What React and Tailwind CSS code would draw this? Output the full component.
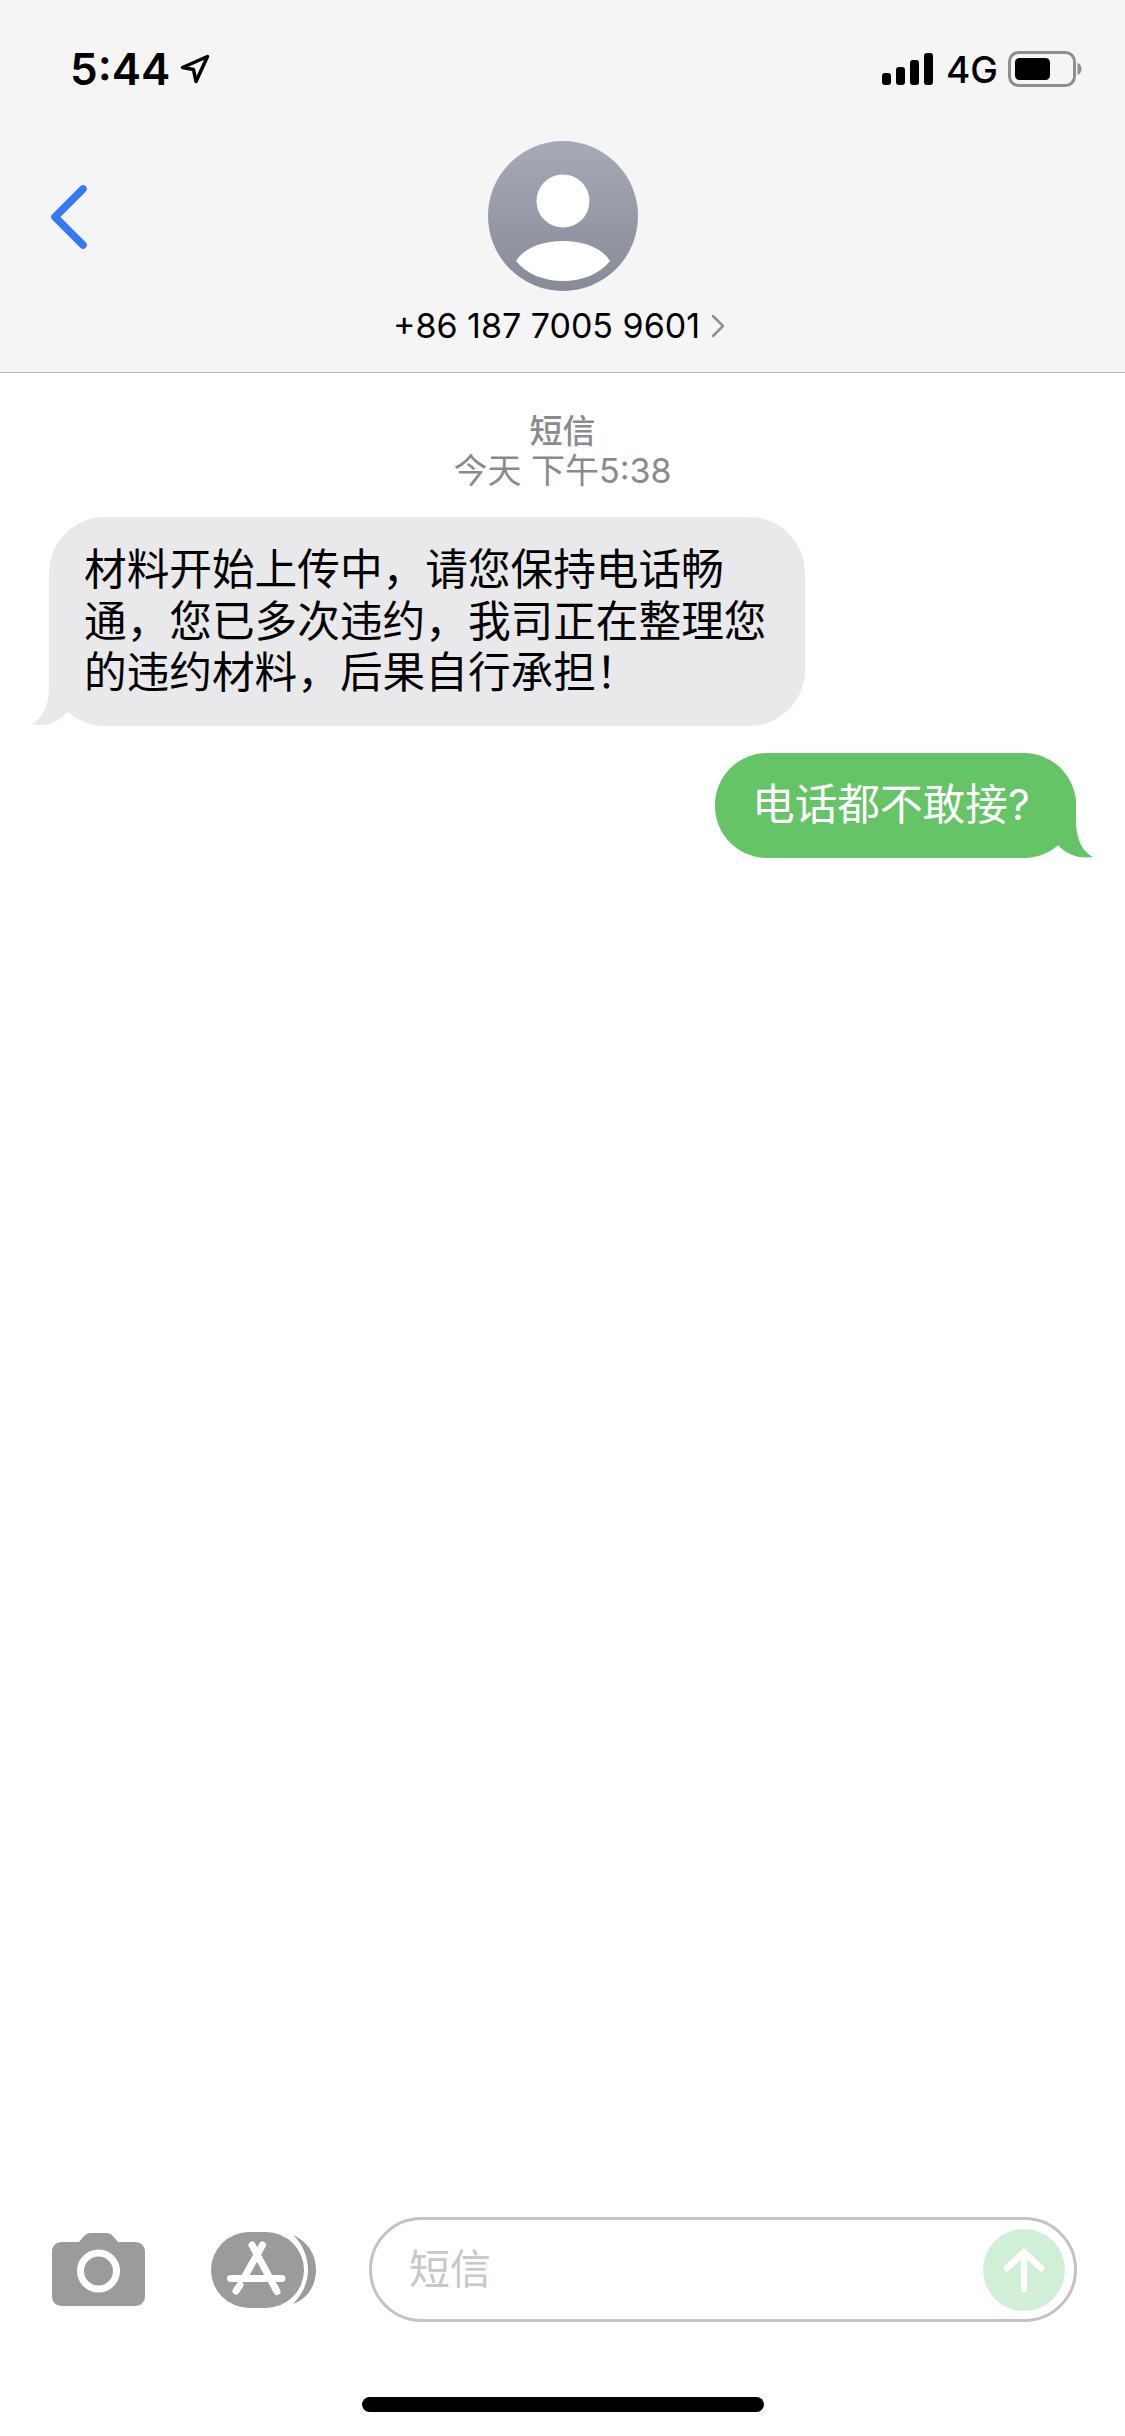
const sans = 'font-[Inter,"Noto_Sans_CJK_SC",sans-serif]'

const StatusBar = () => (
  <div className="flex h-[138px] w-full items-center justify-between pl-[70px] pr-[43px]">
    <div className="flex items-center gap-[10px]">
      <span className="text-[44px] font-semibold leading-none text-black">5:44</span>
      <svg width="30" height="30" viewBox="0 0 30 30" fill="none" stroke="#000" strokeWidth="3.5" strokeLinejoin="round">
        <path d="M2.5 13.5 27.5 2.5 16 27.5 13.5 15.5Z" />
      </svg>
    </div>
    <div className="flex items-center">
      <svg width="51" height="32" viewBox="0 0 51 32" fill="#000">
        <rect x="0" y="20" width="9" height="12" rx="3" />
        <rect x="14" y="14" width="9" height="18" rx="3" />
        <rect x="28" y="7" width="9" height="25" rx="3" />
        <rect x="42" y="0" width="9" height="32" rx="3" />
      </svg>
      <span className="ml-[13px] text-[37px] font-medium leading-none text-black">4G</span>
      <svg className="ml-[10px]" width="74" height="36" viewBox="0 0 74 36">
        <rect x="1.5" y="1.5" width="65" height="33" rx="9" fill="none" stroke="#8e8e8e" strokeWidth="3" />
        <rect x="7" y="7" width="35" height="22" rx="4.5" fill="#000" />
        <path d="M69.5 12c2.500.8 4 3 4 6s-1.500 5.200-4 6Z" fill="#8e8e8e" />
      </svg>
    </div>
  </div>
)

const ContactHeader = () => (
  <header className="flex h-[373px] w-full shrink-0 flex-col border-b border-[#b4b4b4] bg-[#f5f5f5]">
    <StatusBar />
    <div className="mt-[3px] grid grid-cols-[1fr_auto_1fr]">
      <div className="pl-[50px] pt-[44px]">
        <svg width="38" height="64" viewBox="0 0 38 64" fill="none" stroke="#3478f6" strokeWidth="7.500" strokeLinecap="round" strokeLinejoin="round">
          <path d="M33 4 5 32l28 28" />
        </svg>
      </div>
      <div className="flex flex-col items-center">
        <svg className="ml-[2px]" width="150" height="150" viewBox="0 0 150 150">
          <defs>
            <linearGradient id="avatarFill" x1="0" y1="0" x2="0" y2="1">
              <stop offset="0" stopColor="#a6aab7" />
              <stop offset="1" stopColor="#868b97" />
            </linearGradient>
          </defs>
          <circle cx="75" cy="75" r="75" fill="url(#avatarFill)" />
          <circle cx="75" cy="60" r="26.500" fill="#fff" />
          <path d="M28 120C36 107 54 100 75 100s39 7 47 20c-10 13-28 20-47 20s-37-7-47-20Z" fill="#fff" />
        </svg>
        <div className="-ml-[7px] mt-[15px] flex items-center gap-[11px]">
          <span className="whitespace-nowrap text-[34px] leading-[40px] text-black">+86 187 7005 9601</span>
          <svg width="14" height="24" viewBox="0 0 14 24" fill="none" stroke="#8a8f99" strokeWidth="2.500" strokeLinecap="round" strokeLinejoin="round">
            <path d="M2 2l10 10L2 22" />
          </svg>
        </div>
      </div>
      <div />
    </div>
  </header>
)

const Messages = () => (
  <main className="flex min-h-0 flex-1 flex-col">
    <div className="mt-[39px] flex flex-col items-center text-[#8a8a8e]">
      <span className="text-[33px] font-medium leading-[39px]">短信</span>
      <span className="text-[34px] leading-[39px]">今天 下午5:38</span>
    </div>
    <div className="relative ml-[49px] mt-[27px] w-[756px] rounded-[56px] bg-[#e9e9eb] py-[27px] pl-[35px] pr-[31px] text-[42.670px] leading-[51.500px] text-black">
      <svg className="absolute bottom-0 left-[-17px]" width="77" height="60" viewBox="0 0 77 60" fill="#e9e9eb">
        <path d="M17 0V22c0 15-5 30-17 36 13 3 26-1 34-11L60 22V0Z" />
      </svg>
      <p className="relative">材料开始上传中，请您保持电话畅通，您已多次违约，我司正在整理您的违约材料，后果自行承担！</p>
    </div>
    <div className="relative ml-[715px] mt-[27px] flex h-[105px] w-[361px] items-center rounded-[52px] bg-[#65c466] pl-[37px] text-[42.670px] leading-[51.500px] text-white">
      <svg className="absolute bottom-0 right-[-17px]" width="63" height="60" viewBox="0 0 63 60" fill="#65c466">
        <path d="M46 0V22c0 15 4 30 17 37-14 2-26-2-35-12L0 22V0Z" />
      </svg>
      <p className="relative">电话都不敢接?</p>
    </div>
  </main>
)

const Composer = () => (
  <footer className="flex h-[219px] w-full shrink-0 flex-col">
    <div className="flex items-center pl-[52px] pr-[48px]">
      <svg width="93" height="73" viewBox="0 0 93 73">
        <path d="M10 9h17l5-6c2-2 4-3 7-3h15c3 0 5 1 7 3l5 6h17c6 0 10 4 10 10v44c0 6-4 10-10 10H10C4 73 0 69 0 63V19C0 13 4 9 10 9Z" fill="#9b9b9b" />
        <circle cx="46.500" cy="38" r="18" fill="none" stroke="#fff" strokeWidth="7" />
      </svg>
      <svg className="ml-[66px]" width="106" height="76" viewBox="0 0 106 76">
        <rect width="93" height="76" rx="38" fill="#9b9b9b" />
        <path d="M82 3c16 7 23 21 23 35s-7 28-23 34c10-10 15-22 15-34S92 12 82 3Z" fill="#9b9b9b" />
        <g fill="none" stroke="#fff" strokeWidth="7" strokeLinecap="round">
          <path d="M51.500 13 33 46" />
          <path d="M29 53l-4 6" />
          <path d="M41 13 66 59.500" />
          <path d="M19.500 46.500H71" />
        </g>
      </svg>
      <div className="ml-[52px] flex h-[105px] flex-1 items-center justify-between rounded-full border-[3px] border-[#c3c3c3] pl-[37px] pr-[9px]">
        <span className="text-[41px] leading-none text-[#c7c7cc]">短信</span>
        <svg width="82" height="82" viewBox="0 0 82 82">
          <circle cx="41" cy="41" r="41" fill="#d1eed7" />
          <path d="M41 60V23M24 39l17-16 17 16" fill="none" stroke="#fff" strokeWidth="6.500" strokeLinecap="round" strokeLinejoin="round" />
        </svg>
      </div>
    </div>
    <div className="mx-auto mt-[75px] h-[15px] w-[402px] rounded-full bg-black" />
  </footer>
)

export default function App() {
  return (
    <div className={`flex h-[2436px] w-[1125px] flex-col overflow-hidden bg-white ${sans}`}>
      <ContactHeader />
      <Messages />
      <Composer />
    </div>
  )
}
